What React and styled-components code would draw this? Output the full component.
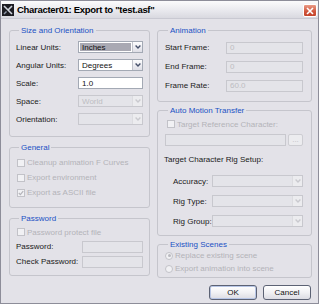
import React from 'react';
import styled, { createGlobalStyle, css } from 'styled-components';

const GlobalStyle = createGlobalStyle`
	html, body {
		margin: 0;
		padding: 0;
		background: #e3e2e8;
	}
	* {
		box-sizing: border-box;
	}
`;

const Window = styled.div`
	width: 319px;
	height: 304px;
	border: 1px solid #8d8d99;
	background: #e3e2e8;
	display: flex;
	flex-direction: column;
	font-family: 'Liberation Sans', Arial, sans-serif;
	font-size: 8px;
	color: #1a1a1a;
	overflow: hidden;
`;

const TitleBar = styled.div`
	height: 18px;
	flex: none;
	display: flex;
	align-items: center;
	gap: 3px;
	padding: 0 1px 0 0;
	background: linear-gradient(#fbfbfc, #e9e9ee 55%, #d9d9e0);
	border-bottom: 1px solid #c9c9d2;
`;

const TitleText = styled.span`
	flex: 1;
	font-size: 9.5px;
	font-weight: bold;
	letter-spacing: -0.3px;
	color: #000;
	white-space: nowrap;
`;

const CloseButton = styled.div`
	width: 14px;
	height: 13px;
	margin-top: 2px;
	border-radius: 2px;
	border: 1px solid #fff;
	background: linear-gradient(#e99a86, #d0553c 60%, #c4442c);
	display: flex;
	align-items: center;
	justify-content: center;
`;

const Body = styled.div`
	flex: 1;
	display: flex;
	gap: 7px;
	padding: 7px 6px 0 8px;
`;

const Column = styled.div`
	width: ${(p) => p.$width}px;
	display: flex;
	flex-direction: column;
`;

const Group = styled.fieldset`
	margin: ${(p) => p.$gap || 0}px 0 0 0;
	padding: ${(p) => p.$pt || 0}px ${(p) => p.$pr || 6}px ${(p) => p.$pb || 6}px ${(p) => p.$pl || 6}px;
	border: 1px solid #c5c5cc;
	border-radius: 3px;
	min-width: 0;
	display: flex;
	flex-direction: column;
`;

const Legend = styled.legend`
	padding: 0 2px;
	margin-left: 3px;
	color: #2151c4;
	font-size: 8px;
	line-height: 9px;
`;

const Row = styled.div`
	height: ${(p) => p.$h}px;
	display: flex;
	align-items: center;
	margin-left: ${(p) => p.$shift || 0}px;
	padding-left: ${(p) => p.$indent || 0}px;
	gap: ${(p) => p.$gap || 0}px;
	color: ${(p) => (p.$disabled ? '#b3b3b8' : '#1a1a1a')};
	white-space: nowrap;
`;

const Label = styled.span`
	width: ${(p) => p.$w}px;
	flex: none;
`;

const fieldBox = css`
	height: 12px;
	border: 1px solid ${(p) => (p.$enabled ? '#a3a9b4' : '#c8c8ce')};
	background: ${(p) => (p.$enabled ? '#fff' : '#e4e4e9')};
	color: ${(p) => (p.$enabled ? '#111' : '#bdbdc2')};
`;

const Field = styled.div`
	${fieldBox};
	width: ${(p) => p.$w}px;
	display: flex;
	align-items: center;
	padding-left: 3px;
`;

const Combo = styled.div`
	${fieldBox};
	width: ${(p) => p.$w}px;
	display: flex;
	align-items: stretch;
`;

const ComboText = styled.div`
	flex: 1;
	margin: 1px;
	padding-left: 2px;
	display: flex;
	align-items: center;
	background: ${(p) => (p.$selected ? '#a9a9b3' : 'transparent')};
	color: ${(p) => (p.$selected ? '#111' : 'inherit')};
`;

const ComboButton = styled.div`
	width: 10px;
	border-left: 1px solid ${(p) => (p.$enabled ? '#c2c4cc' : '#dcdce0')};
	background: ${(p) =>
		p.$enabled ? 'linear-gradient(#fdfdfe, #dedee6)' : '#ececef'};
	display: flex;
	align-items: center;
	justify-content: center;
`;

const Box = styled.span`
	width: 8px;
	height: 8px;
	flex: none;
	border: 1px solid #c2c2c8;
	background: #f1f1f4;
	border-radius: ${(p) => (p.$round ? '50%' : '0')};
	display: flex;
	align-items: center;
	justify-content: center;
	margin-left: ${(p) => p.$ml || 0}px;
	margin-right: ${(p) => p.$mr || 2}px;
`;

const Dot = styled.span`
	width: 3px;
	height: 3px;
	border-radius: 50%;
	background: #b9b9bf;
`;

const SmallButton = styled.div`
	width: 15px;
	height: 12px;
	border: 1px solid #cdcdd2;
	border-radius: 2px;
	background: #ececef;
	color: #c0c0c5;
	display: flex;
	align-items: center;
	justify-content: center;
	line-height: 8px;
`;

const Footer = styled.div`
	display: flex;
	justify-content: flex-end;
	gap: 6px;
	margin-top: 7px;
	padding-right: 1px;
`;

const Button = styled.div`
	width: 48px;
	height: 15px;
	border: 1px solid #5c6274;
	border-radius: 3px;
	background: linear-gradient(#ffffff, #f1f1f4 50%, #dcdce3);
	display: flex;
	align-items: center;
	justify-content: center;
	color: #111;
	${(p) =>
		p.$default &&
		css`
			box-shadow: inset 0 0 0 1px #b8c6e6;
		`}
`;

const Chevron = ({ faded }) => (
	<svg width="6" height="4" viewBox="0 0 6 4">
		<path d="M0.6 0.6 L3 3 L5.4 0.6" fill="none" stroke={faded ? '#c9c9ce' : '#46506a'} strokeWidth="1.4" />
	</svg>
);

const AppIcon = () => (
	<svg width="12" height="12" viewBox="0 0 12 12" style={{ marginLeft: 1 }}>
		<rect x="0" y="0" width="12" height="12" fill="#1c1c22" />
		<path d="M2 2 L10 10 M10 2 L6.5 5.5" stroke="#cfd3dc" strokeWidth="1.6" />
		<path d="M2 10 L4.5 7.5" stroke="#8e97a8" strokeWidth="1.4" />
	</svg>
);

const SelectBox = ({ w, value, enabled, selected }) => (
	<Combo $w={w} $enabled={enabled}>
		<ComboText $selected={selected}>{value}</ComboText>
		<ComboButton $enabled={enabled}>
			<Chevron faded={!enabled} />
		</ComboButton>
	</Combo>
);

const Check = ({ checked, ml, mr }) => (
	<Box $ml={ml} $mr={mr}>
		{checked && (
			<svg width="6" height="6" viewBox="0 0 6 6">
				<path d="M0.8 3 L2.4 4.6 L5.2 1.2" fill="none" stroke="#b4b4ba" strokeWidth="1.2" />
			</svg>
		)}
	</Box>
);

const Radio = ({ checked, ml, mr }) => (
	<Box $round $ml={ml} $mr={mr}>
		{checked && <Dot />}
	</Box>
);

export default function App() {
	return (
		<>
			<GlobalStyle />
			<Window>
				<TitleBar>
					<AppIcon />
					<TitleText>Character01: Export to "test.asf"</TitleText>
					<CloseButton>
						<svg width="8" height="8" viewBox="0 0 8 8">
							<path d="M1 1 L7 7 M7 1 L1 7" stroke="#fff" strokeWidth="1.6" />
						</svg>
					</CloseButton>
				</TitleBar>
				<Body>
					<Column $width={141}>
						<Group $pt={3} $pb={8} $pr={5}>
							<Legend>Size and Orientation</Legend>
							<Row $h={18}>
								<Label $w={62}>Linear Units:</Label>
								<SelectBox w={65} value="Inches" enabled selected />
							</Row>
							<Row $h={18}>
								<Label $w={62}>Angular Units:</Label>
								<SelectBox w={65} value="Degrees" enabled />
							</Row>
							<Row $h={18}>
								<Label $w={62}>Scale:</Label>
								<Field $w={65} $enabled>
									1.0
								</Field>
							</Row>
							<Row $h={18}>
								<Label $w={62}>Space:</Label>
								<SelectBox w={65} value="World" />
							</Row>
							<Row $h={18}>
								<Label $w={62}>Orientation:</Label>
								<SelectBox w={65} value="" />
							</Row>
						</Group>
						<Group $gap={6} $pt={3} $pb={7}>
							<Legend>General</Legend>
							<Row $h={15} $disabled>
								<Check ml={1} />
								Cleanup animation F Curves
							</Row>
							<Row $h={15} $disabled>
								<Check ml={1} />
								Export environment
							</Row>
							<Row $h={15} $disabled>
								<Check ml={1} checked />
								Export as ASCII file
							</Row>
						</Group>
						<Group $gap={6} $pt={2} $pb={6} $pr={5}>
							<Legend>Password</Legend>
							<Row $h={14} $disabled>
								<Check ml={1} />
								Password protect file
							</Row>
							<Row $h={15}>
								<Label $w={66}>Password:</Label>
								<Field $w={61} />
							</Row>
							<Row $h={15}>
								<Label $w={66}>Check Password:</Label>
								<Field $w={61} />
							</Row>
						</Group>
					</Column>
					<Column $width={155}>
						<Group $pt={3} $pb={6} $pl={7} $pr={8}>
							<Legend>Animation</Legend>
							<Row $h={19}>
								<Label $w={61}>Start Frame:</Label>
								<Field $w={77}>0</Field>
							</Row>
							<Row $h={19}>
								<Label $w={61}>End Frame:</Label>
								<Field $w={77}>0</Field>
							</Row>
							<Row $h={19}>
								<Label $w={61}>Frame Rate:</Label>
								<Field $w={77}>60.0</Field>
							</Row>
						</Group>
						<Group $gap={4} $pt={2} $pb={4} $pl={7} $pr={8}>
							<Legend>Auto Motion Transfer</Legend>
							<Row $h={14} $disabled>
								<Check ml={2} />
								Target Reference Character:
							</Row>
							<Row $h={17} $gap={2}>
								<Field $w={121} />
								<SmallButton>...</SmallButton>
							</Row>
							<Row $h={23} $shift={-1}>
								Target Character Rig Setup:
							</Row>
							<Row $h={20} $indent={8}>
								<Label $w={39}>Accuracy:</Label>
								<SelectBox w={91} value="" />
							</Row>
							<Row $h={20} $indent={8}>
								<Label $w={39}>Rig Type:</Label>
								<SelectBox w={91} value="" />
							</Row>
							<Row $h={20} $indent={8}>
								<Label $w={39}>Rig Group:</Label>
								<SelectBox w={91} value="" />
							</Row>
						</Group>
						<Group $gap={4} $pt={0} $pb={2} $pl={7} $pr={8}>
							<Legend>Existing Scenes</Legend>
							<Row $h={13} $disabled>
								<Radio checked mr={2} />
								Replace existing scene
							</Row>
							<Row $h={13} $disabled>
								<Radio mr={2} />
								Export animation into scene
							</Row>
						</Group>
						<Footer>
							<Button $default>OK</Button>
							<Button>Cancel</Button>
						</Footer>
					</Column>
				</Body>
			</Window>
		</>
	);
}
